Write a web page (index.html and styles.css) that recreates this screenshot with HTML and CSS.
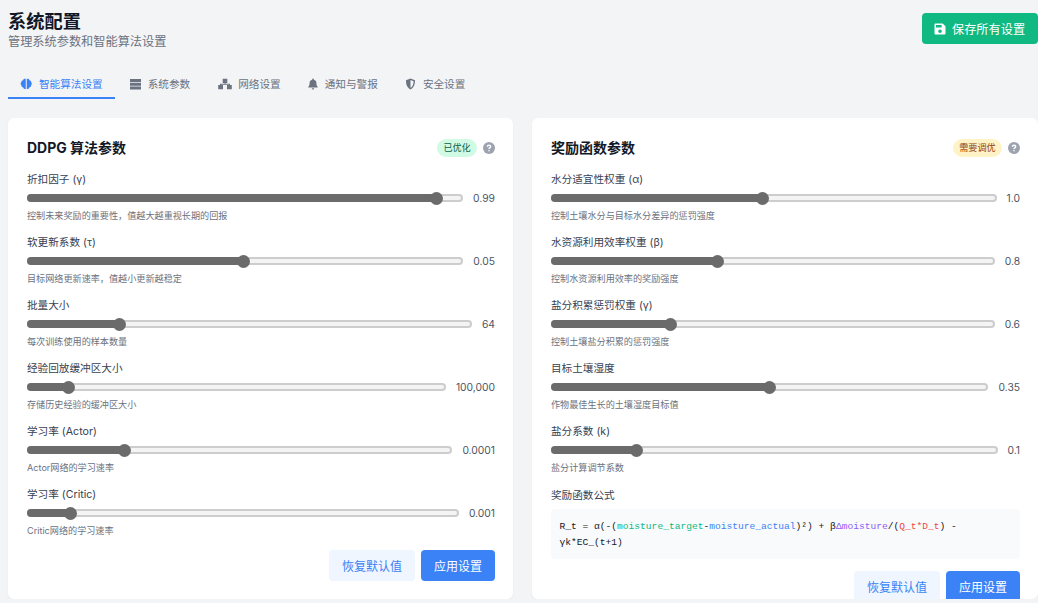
FILE: index.html
```html
<!DOCTYPE html>
<html lang="zh-CN">
<head>
<meta charset="utf-8">
<title>系统配置</title>
<link rel="stylesheet" href="styles.css">
</head>
<body>
<div class="page">
  <header class="head">
    <div>
      <h1>系统配置</h1>
      <p class="sub">管理系统参数和智能算法设置</p>
    </div>
    <button class="save"><svg class="ico" viewBox="0 0 12 12"><path fill-rule="evenodd" d="M1.500 .5h7.200l2.800 2.800v7.200a1 1 0 0 1-1 1h-9a1 1 0 0 1-1-1v-9a1 1 0 0 1 1-1zM2 2v2.600h5.600V2zM6 6.400a1.800 1.800 0 1 0 0 3.600a1.800 1.800 0 0 0 0-3.600z"/></svg>保存所有设置</button>
  </header>
  <nav class="tabs">
    <a class="tab on"><svg class="ico brain" viewBox="0 0 12 12"><path d="M5.500 1v10C4 11.300 3 10.300 2.900 9.400 1.500 9 .9 8 1 7 .2 6.200.2 5 1.100 4.300 1 3 1.900 2.200 2.900 2.200 3.200 1.200 4.300.6 5.500 1zM6.500 1v10c1.500.3 2.500-.7 2.600-1.600C10.500 9 11.100 8 11 7c.8-.8.8-2-.1-2.700C11 3 10.100 2.200 9.100 2.200 8.800 1.200 7.700.6 6.500 1z"/></svg>智能算法设置</a>
    <a class="tab"><svg class="ico server" viewBox="0 0 11 12"><path d="M0 1h11v3H0zM0 4.700h11v3H0zM0 8.400h11v3H0z"/></svg>系统参数</a>
    <a class="tab"><svg class="ico wide" viewBox="0 0 14 12"><path d="M4.700 .8h4.600v4.200H4.700zM.2 7h4.800v4.200H.2zM9 7h4.800v4.200H9z"/><path d="M6.500 5h1v.8H12V7h-1V6.800H3V7H2V5.800h4.500z"/></svg>网络设置</a>
    <a class="tab"><svg class="ico small" viewBox="0 0 10 12"><path d="M5 .5c.5 0 .8.300.8.800v.4C7.400 2 8.400 3.300 8.400 5c0 2.200.6 3 1.300 3.800.2.300 0 .8-.4.800H.7c-.4 0-.6-.5-.4-.8C1 8 1.600 7.200 1.600 5c0-1.700 1-3 2.600-3.300v-.4c0-.5.300-.8.800-.8zM3.800 10.200h2.400c0 .7-.5 1.300-1.200 1.300s-1.200-.6-1.200-1.300z"/></svg>通知与警报</a>
    <a class="tab"><svg class="ico server" viewBox="0 0 10 12"><path fill-rule="evenodd" d="M5 .5l4.500 1.800c0 4-1 7.500-4.500 9.200C1.500 9.800.5 6.300.5 2.300zM5 2v8c2.200-1.300 3-3.700 3.100-6.700z"/></svg>安全设置</a>
  </nav>
  <main class="grid">
    <section class="card">
      <div class="card-head">
        <h2>DDPG 算法参数</h2>
        <span class="badge ok">已优化</span>
        <svg class="help" viewBox="0 0 12 12"><circle cx="6" cy="6" r="6"/><path class="qm" d="M4.300 4.700C4.400 3.700 5.100 3.200 6 3.200c1 0 1.700.6 1.700 1.400 0 1.300-1.700 1.200-1.700 2.400M6 8v1.200"/></svg>
      </div>
      <div class="field">
        <label>折扣因子 (γ)</label>
        <div class="slider"><div class="track"><div class="fill" style="width:93.8%"><i class="thumb"></i></div></div><span class="val">0.99</span></div>
        <p class="desc">控制未来奖励的重要性，值越大越重视长期的回报</p>
      </div>
      <div class="field">
        <label>软更新系数 (τ)</label>
        <div class="slider"><div class="track"><div class="fill" style="width:49.7%"><i class="thumb"></i></div></div><span class="val">0.05</span></div>
        <p class="desc">目标网络更新速率，值越小更新越稳定</p>
      </div>
      <div class="field">
        <label>批量大小</label>
        <div class="slider"><div class="track"><div class="fill" style="width:20.9%"><i class="thumb"></i></div></div><span class="val">64</span></div>
        <p class="desc">每次训练使用的样本数量</p>
      </div>
      <div class="field">
        <label>经验回放缓冲区大小</label>
        <div class="slider"><div class="track"><div class="fill" style="width:10%"><i class="thumb"></i></div></div><span class="val">100,000</span></div>
        <p class="desc">存储历史经验的缓冲区大小</p>
      </div>
      <div class="field">
        <label>学习率 (Actor)</label>
        <div class="slider"><div class="track"><div class="fill" style="width:22.9%"><i class="thumb"></i></div></div><span class="val">0.0001</span></div>
        <p class="desc">Actor网络的学习速率</p>
      </div>
      <div class="field">
        <label>学习率 (Critic)</label>
        <div class="slider"><div class="track"><div class="fill" style="width:10%"><i class="thumb"></i></div></div><span class="val">0.001</span></div>
        <p class="desc">Critic网络的学习速率</p>
      </div>
      <div class="actions">
        <button class="btn ghost">恢复默认值</button>
        <button class="btn primary">应用设置</button>
      </div>
    </section>
    <section class="card">
      <div class="card-head">
        <h2>奖励函数参数</h2>
        <span class="badge warn">需要调优</span>
        <svg class="help" viewBox="0 0 12 12"><circle cx="6" cy="6" r="6"/><path class="qm" d="M4.300 4.700C4.400 3.700 5.100 3.200 6 3.200c1 0 1.700.6 1.700 1.400 0 1.300-1.700 1.200-1.700 2.400M6 8v1.200"/></svg>
      </div>
      <div class="field">
        <label>水分适宜性权重 (α)</label>
        <div class="slider"><div class="track"><div class="fill" style="width:47.4%"><i class="thumb"></i></div></div><span class="val">1.0</span></div>
        <p class="desc">控制土壤水分与目标水分差异的惩罚强度</p>
      </div>
      <div class="field">
        <label>水资源利用效率权重 (β)</label>
        <div class="slider"><div class="track"><div class="fill" style="width:37.5%"><i class="thumb"></i></div></div><span class="val">0.8</span></div>
        <p class="desc">控制水资源利用效率的奖励强度</p>
      </div>
      <div class="field">
        <label>盐分积累惩罚权重 (γ)</label>
        <div class="slider"><div class="track"><div class="fill" style="width:27%"><i class="thumb"></i></div></div><span class="val">0.6</span></div>
        <p class="desc">控制土壤盐分积累的惩罚强度</p>
      </div>
      <div class="field">
        <label>目标土壤湿度</label>
        <div class="slider"><div class="track"><div class="fill" style="width:50%"><i class="thumb"></i></div></div><span class="val">0.35</span></div>
        <p class="desc">作物最佳生长的土壤湿度目标值</p>
      </div>
      <div class="field">
        <label>盐分系数 (k)</label>
        <div class="slider"><div class="track"><div class="fill" style="width:19.2%"><i class="thumb"></i></div></div><span class="val">0.1</span></div>
        <p class="desc">盐分计算调节系数</p>
      </div>
      <div class="formula">
        <label>奖励函数公式</label>
        <code class="code">R_t = α(-(<b class="g">moisture_target</b>-<b class="bl">moisture_actual</b>)²) + β<b class="p">Δmoisture</b>/(<b class="r">Q_t*D_t</b>) - γk*EC_(t+1)</code>
      </div>
      <div class="actions">
        <button class="btn ghost">恢复默认值</button>
        <button class="btn primary">应用设置</button>
      </div>
    </section>
  </main>
</div>
</body>
</html>
```
FILE: styles.css
```css
* { box-sizing: border-box; }
html, body { margin: 0; height: 100%; overflow: hidden; }
body {
  background: #f3f4f6;
  color: #1f2937;
  font-family: Inter, "Noto Sans CJK SC", sans-serif;
}
.page { height: 599px; padding: 0 0 0 8px; display: flex; flex-direction: column; overflow: hidden; }
.head { display: flex; justify-content: space-between; align-items: flex-start; padding-top: 13px; height: 66px; }
h1 { margin: -3px 0 0; font-size: 18.240px; line-height: 22px; font-weight: 700; color: #111827; }
.sub { margin: 1px 0 0; font-size: 12.200px; line-height: 18px; color: #6b7280; }
.save {
  display: flex; align-items: center; gap: 6px;
  height: 31px; width: 116px; padding: 0 12px; border: 0; border-radius: 4px;
  background: #10b981; color: #fff; font: inherit; font-size: 12.200px; white-space: nowrap;
}
.ico { width: 12px; height: 12px; fill: currentColor; flex: none; }
.ico.brain { width: 12.500px; }
.ico.server { width: 11px; }
.ico.wide { width: 14px; }
.ico.small { width: 10px; }
.tabs { display: flex; gap: 3.500px; height: 33px; }
.tab {
  display: flex; align-items: center; gap: 6.500px;
  height: 33px; padding: 4px 12px 0;
  font-size: 10.640px; color: #6b7280; border-bottom: 2px solid transparent;
}
.tab.on { color: #3b82f6; border-bottom-color: #3b82f6; }
.grid { flex: 1; min-height: 0; margin-top: 19px; display: grid; grid-template-columns: 505px 1fr; gap: 19px; }
.card {
  background: #fff; border-radius: 6px; padding: 19px 18px 0 19px;
  box-shadow: 0 1px 2px rgba(0,0,0,.05); overflow: hidden; min-height: 0;
}
.card-head { display: flex; align-items: center; height: 21px; margin-bottom: 14px; }
h2 { margin: 0 auto 0 0; font-size: 14px; line-height: 21px; font-weight: 700; color: #111827; }
.badge { font-size: 9.120px; line-height: 18px; height: 18px; padding: 0 6.300px; border-radius: 9px; }
.badge.ok { background: #d1fae5; color: #065f46; }
.badge.warn { background: #fef3c7; color: #92400e; }
.help { width: 12px; height: 12px; margin-left: 6px; fill: #9ca3af; }
.help .qm { fill: none; stroke: #fff; stroke-width: 1.400; }
.field { height: 63px; }
label { display: block; font-size: 10.640px; line-height: 16px; color: #374151; }
.slider { display: flex; align-items: center; gap: 10px; height: 16px; margin-top: 2px; }
.track {
  flex: 1; height: 8px; border-radius: 4px; background: #f4f4f4;
  box-shadow: inset 0 0 0 2px #cdcdcd; position: relative;
}
.fill { height: 8px; border-radius: 4px; background: #6b6b6b; position: relative; }
.thumb {
  position: absolute; right: -6.500px; top: -2.500px;
  width: 13px; height: 13px; border-radius: 50%; background: #6b6b6b;
}
.val { font-size: 10.300px; line-height: 16px; color: #4b5563; }
.desc { margin: 3px 0 0; font-size: 9.120px; line-height: 13px; color: #6b7280; }
.actions { display: flex; justify-content: flex-end; gap: 6px; margin-top: 0; }
.btn { height: 31px; padding: 0 13px; border: 0; border-radius: 4px; font: inherit; font-size: 12px; }
.ghost { background: #eff6ff; color: #3b82f6; }
.primary { background: #3b82f6; color: #fff; }
.formula { margin-top: 1px; }
.code {
  display: block; margin-top: 5px; height: 50px; padding: 10px 8.500px; border-radius: 4px;
  background: #f9fafb; color: #111827;
  font-family: "Liberation Mono", monospace; font-size: 9.600px; line-height: 16px;
}
.code b { font-weight: 400; }
.g { color: #10b981; }
.bl { color: #3b82f6; }
.p { color: #8b5cf6; }
.r { color: #ef4444; }
.formula + .actions { margin-top: 12px; }
```
